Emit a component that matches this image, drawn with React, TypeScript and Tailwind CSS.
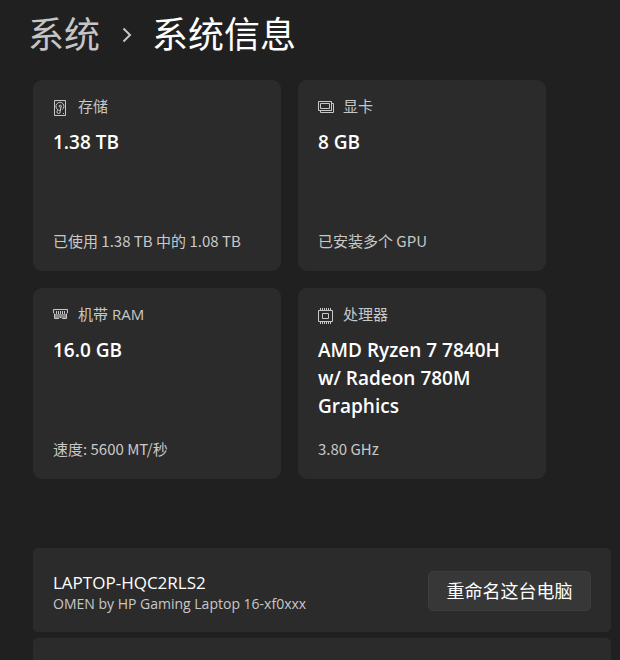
import type { ReactNode } from 'react';

type SpecCardProps = {
  icon: ReactNode;
  label: string;
  value: string;
  detail: string;
};

function StorageIcon() {
  return (
    <svg viewBox="0 0 16 16" className="h-4 w-4" fill="none" stroke="currentColor" aria-hidden="true">
      <path d="M1.5 .5h11v15h-11z" />
      <path d="M5 9.8A4 4 0 1 1 9.2 9.6" />
      <circle cx="7.3" cy="6.2" r="1.1" />
      <path d="M8 6.8L7.2 11.2" />
      <circle cx="5.6" cy="11.8" r="1.7" />
      <path d="M10 13.5h1" />
    </svg>
  );
}

function GraphicsIcon() {
  return (
    <svg viewBox="0 0 16 16" className="h-4 w-4" fill="none" stroke="currentColor" aria-hidden="true">
      <path d="M.5 1.5h13v9H.5z" />
      <path d="M2.5 3.5h9v5h-9z" />
      <path d="M14 3.5h1.5v9h-13V11" />
    </svg>
  );
}

function MemoryIcon() {
  return (
    <svg viewBox="0 0 16 16" className="h-4 w-4" fill="none" stroke="currentColor" aria-hidden="true">
      <path d="M1 6h13v4H9.5L8.5 9h-2l-1 1H1z" fill="currentColor" fillOpacity="0.6" stroke="none" />
      <path d="M.5 1.5h14V5l-1 .8v4.7H9.3l-1-1H6.7l-1 1H1.5V5.8L.5 5z" />
      <path d="M3.5 3v3M5.5 3v3M7.5 3v3M9.5 3v3M11.5 3v3" />
    </svg>
  );
}

function ProcessorIcon() {
  return (
    <svg viewBox="0 0 16 16" className="h-4 w-4" fill="none" stroke="currentColor" aria-hidden="true">
      <path d="M.5 2.5h14v11H.5z" />
      <path d="M4.5 5.5h6v5h-6z" />
      <path d="M2.5 0v2M4.5 0v2M6.5 0v2M8.5 0v2M10.5 0v2M12.5 0v2" />
      <path d="M2.5 14v2M4.5 14v2M6.5 14v2M8.5 14v2M10.5 14v2M12.5 14v2" />
    </svg>
  );
}

const specs: SpecCardProps[] = [
  { icon: <StorageIcon />, label: '存储', value: '1.38 TB', detail: '已使用 1.38 TB 中的 1.08 TB' },
  { icon: <GraphicsIcon />, label: '显卡', value: '8 GB', detail: '已安装多个 GPU' },
  { icon: <MemoryIcon />, label: '机带 RAM', value: '16.0 GB', detail: '速度: 5600 MT/秒' },
  { icon: <ProcessorIcon />, label: '处理器', value: 'AMD Ryzen 7 7840H w/ Radeon 780M Graphics', detail: '3.80 GHz' },
];

function SpecCard({ icon, label, value, detail }: SpecCardProps) {
  return (
    <section className="flex min-h-[191px] flex-col rounded-[9px] bg-[#2b2b2b] px-5 pt-4 pb-5">
      <div className="flex items-end gap-[9px] text-[15px] leading-5 text-[#c8c8c8]">
        {icon}
        <span>{label}</span>
      </div>
      <h2 className="mt-3 text-[19px] leading-7 font-semibold text-white">{value}</h2>
      <p className="mt-auto font-['Noto_Sans_CJK_SC',sans-serif] text-[15px] leading-5 text-[#c8c8c8]">{detail}</p>
    </section>
  );
}

export default function App() {
  return (
    <main className="flex min-h-screen flex-col bg-[#202020] pr-[9px] pl-[33px] font-['Open_Sans','Noto_Sans_CJK_SC',sans-serif]">
      <nav className="-ml-[5px] flex items-center text-4xl leading-[70px]">
        <a href="#system" className="text-[#c5c5c5]">系统</a>
        <svg viewBox="0 0 10 16" className="mr-5 ml-[22px] h-4 w-[10px]" fill="none" stroke="#c5c5c5" strokeWidth="2" aria-hidden="true">
          <path d="M1.5 1.5L8 8l-6.5 6.5" />
        </svg>
        <h1 className="text-white">系统信息</h1>
      </nav>

      <div className="mt-[10px] mr-[65px] grid grid-cols-2 gap-[17px]">
        {specs.map((spec) => (
          <SpecCard key={spec.label} {...spec} />
        ))}
      </div>

      <section className="mt-[69px] flex min-h-[84px] items-center justify-between rounded-[5px] bg-[#2b2b2b] px-5 pt-[2px]">
        <div className="pt-[3px]">
          <h2 className="text-[17px] leading-[22px] text-white">LAPTOP-HQC2RLS2</h2>
          <p className="text-sm leading-5 text-[#c8c8c8]">OMEN by HP Gaming Laptop 16-xf0xxx</p>
        </div>
        <button type="button" className="h-10 min-w-[163px] rounded-[5px] border border-[#3d3d3d] bg-[#373737] px-4 text-lg leading-6 text-white">
          重命名这台电脑
        </button>
      </section>

      <section className="mt-[6px] flex-1 rounded-t-[5px] bg-[#2b2b2b]" />
    </main>
  );
}
